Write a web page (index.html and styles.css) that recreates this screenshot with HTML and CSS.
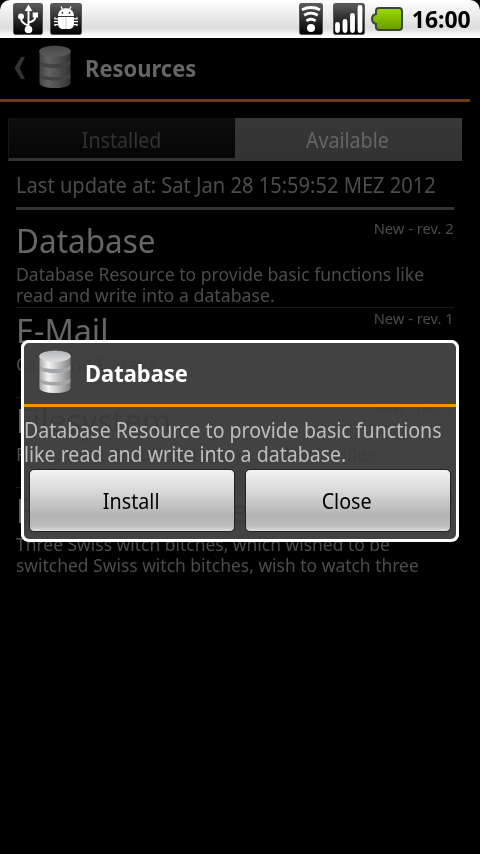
FILE: index.html
```html
<!DOCTYPE html>
<html lang="en">
<head>
<meta charset="utf-8">
<title>Resources</title>
<link rel="stylesheet" href="styles.css">
</head>
<body>
<svg width="0" height="0" class="defs">
  <defs>
    <linearGradient id="metal"><stop offset="0" stop-color="#a8a8a8"/><stop offset=".28" stop-color="#f4f4f4"/><stop offset=".6" stop-color="#c4c4c4"/><stop offset="1" stop-color="#808080"/></linearGradient>
    <linearGradient id="lid" x2="0" y2="1"><stop offset="0" stop-color="#b4b6b9"/><stop offset="1" stop-color="#dcdddf"/></linearGradient>
    <linearGradient id="tile" x2="0" y2="1"><stop offset="0" stop-color="#5c5c5c"/><stop offset=".6" stop-color="#222"/><stop offset="1" stop-color="#000"/></linearGradient>
    <linearGradient id="charge" x2="0" y2="1"><stop offset="0" stop-color="#9bdc00"/><stop offset="1" stop-color="#679800"/></linearGradient>
    <symbol id="db" viewBox="0 0 32 44">
      <path d="M.5 31v7c0 3 7 5 15.500 5s15.500-2 15.500-5v-7z" fill="url(#metal)"/>
      <path d="M.5 28v3c0 6 31 6 31 0v-3z" fill="#a3a6a9"/>
      <path d="M.5 19v8.500c0 3 7 4.500 15.500 4.500s15.500-1.500 15.500-4.500v-8.500z" fill="url(#metal)"/>
      <path d="M.5 15v3.500c0 6 31 6 31 0v-3.500z" fill="#a3a6a9"/>
      <path d="M.5 6v8.500c0 3 7 4.500 15.500 4.500s15.500-1.500 15.500-4.500v-8.500z" fill="url(#metal)"/>
      <ellipse cx="16" cy="6.200" rx="15.500" ry="5.200" fill="url(#lid)" stroke="#d8d8d8" stroke-width=".6"/>
    </symbol>
  </defs>
</svg>

<div class="status">
  <svg class="usb" width="30" height="32" viewBox="0 0 30 32"><rect x=".5" y=".5" width="29" height="31" rx="2" fill="url(#tile)" stroke="#555"/><path d="M15.500 6v21M15.500 22.500q-7.500-2-7.500-8M15.500 19.500q7-1 7-7" fill="none" stroke="#fff" stroke-width="2"/><path d="M15.500 1.500l3.800 6.500h-7.600z" fill="#fff"/><circle cx="8" cy="13.500" r="3" fill="#fff"/><path d="M19.700 9.500h5.300v5h-5.300z" fill="#fff"/><circle cx="15.500" cy="26.500" r="3.800" fill="#fff"/></svg>
  <svg class="bug" width="32" height="32" viewBox="0 0 32 32"><rect x=".5" y=".5" width="31" height="31" rx="2" fill="url(#tile)" stroke="#555"/><path d="M8 13c0-10.500 16-10.500 16 0zM8 14h16v7c0 3-2.500 5-5 5h-6c-2.500 0-5-2-5-5z" fill="#fff"/><path d="M11 3.500l1.500 3M21 3.500l-1.500 3M8 18.700H4M8 15.800H5v-1.500M8 21.600H5v1.500M24 18.700h4M24 15.800h3v-1.500M24 21.600h3v1.500" fill="none" stroke="#fff" stroke-width="1.300"/><path d="M16 14v12" stroke="#ccc"/><circle cx="12.500" cy="9.800" r=".9" fill="#222"/><circle cx="19.500" cy="9.800" r=".9" fill="#222"/></svg>
  <span class="spring"></span>
  <svg class="wifi" width="24" height="32" viewBox="0 0 24 32"><rect x=".5" y=".5" width="23" height="31" rx="2" fill="url(#tile)" stroke="#555"/><g fill="none" stroke="#fff" stroke-width="2.800"><path d="M3 6.800q9-4.600 18 0"/><path d="M5.200 12.300q6.800-4.200 13.600 0"/><path d="M7.400 17.800q4.600-3.200 9.200 0"/></g><circle cx="12" cy="25" r="4" fill="#fff"/></svg>
  <svg class="signal" width="32" height="32" viewBox="0 0 32 32"><rect x=".5" y=".5" width="31" height="31" rx="2" fill="url(#tile)" stroke="#555"/><path d="M4.500 21.500v6M12 18.500v9M19.500 12.500v15M27 4.500v23" stroke="#fff" stroke-width="4.800" stroke-linecap="round"/></svg>
  <svg class="battery" width="32" height="24" viewBox="0 0 32 24"><path d="M8 1h20q3 0 3 3v16q0 3-3 3H8q-3 0-3-3v-3q-4-1-4-5t4-5V4q0-3 3-3z" fill="url(#charge)" stroke="#3c4438" stroke-width="2"/></svg>
  <span class="clock t">16:00</span>
</div>

<div class="screen">
  <header class="bar">
    <svg class="back" width="12" height="22" viewBox="0 0 12 22"><path d="M7 0h4L5.500 11 11 22H7L.5 11z" fill="#333"/></svg>
    <svg class="db dim" width="32" height="44"><use href="#db"/></svg>
    <h1><span class="t">Resources</span></h1>
  </header>
  <nav class="tabs">
    <div class="tab"><span class="t">Installed</span></div>
    <div class="tab active"><span class="t">Available</span></div>
  </nav>
  <p class="updated"><span class="t">Last update at: Sat Jan 28 15:59:52 MEZ 2012</span></p>
  <ul class="list">
    <li><div class="head"><span class="t name">Database</span><span class="t rev">New - rev. 2</span></div>
      <p><span class="t">Database Resource to provide basic functions like</span><br><span class="t wide">read and write into a database.</span></p></li>
    <li><div class="head"><span class="t name wide">E-Mail</span><span class="t rev">New - rev. 1</span></div>
      <p><span class="t">Can send E-Mails</span></p></li>
    <li><div class="head"><span class="t name">Filesystem</span><span class="t rev">New - rev. 2</span></div>
      <p><span class="t full">Filesystem Resource to read and write files.</span></p></li>
    <li><div class="head"><span class="t name wide">Event Resources</span><span class="t rev">New - rev. 4</span></div>
      <p><span class="t snug">Three Swiss witch bitches, which wished to be</span><br><span class="t snug">switched Swiss witch bitches, wish to watch three</span></p></li>
  </ul>
</div>

<div class="dialog">
  <div class="title"><svg class="db" width="32" height="44"><use href="#db"/></svg><h2><span class="t">Database</span></h2></div>
  <p class="message"><span class="t">Database Resource to provide basic functions</span><br><span class="t">like read and write into a database.</span></p>
  <div class="buttons"><button><span class="t">Install</span></button><button><span class="t">Close</span></button></div>
</div>
</body>
</html>
```

FILE: styles.css
```css
* { box-sizing: border-box; margin: 0; padding: 0; }
body { width: 480px; height: 854px; overflow: hidden; background: #000; font-family: "Noto Sans", "Open Sans", sans-serif; position: relative; }
.defs { position: absolute; }
.t { display: inline-block; white-space: nowrap; transform-origin: 0 50%; }
.status { height: 38px; display: flex; align-items: center; padding: 0 9px 0 13px; border-radius: 10px 10px 0 0; background: linear-gradient(#fff, #dedede 72%, #e4e4e4 80%, #f4f4f4 88%, #fff); }
.spring { flex: 1; }
.bug { margin-left: 7px; }
.signal { margin-left: 10px; }
.battery { margin-left: 6px; margin-top: -1px; }
.clock { margin-left: 6px; font-size: 24px; font-weight: 700; line-height: 32px; color: #000; transform: scaleX(.955); transform-origin: 100% 50%; }
.bar { height: 64px; width: 470px; display: flex; align-items: center; padding: 0 0 1px 14px; border-bottom: 3px solid #6e3d00; }
.bar .db { margin-left: 13px; margin-top: -3px; }
.dim { opacity: .4; }
h1, h2 { font-size: 24px; line-height: 32px; margin-left: 14px; }
h1 { color: #666; margin-top: -1px; }
h1 .t, h2 .t { transform: scaleX(.914); }
.tabs { margin: 16px 18px 0 8px; height: 43px; display: flex; }
.tab { flex: 1; display: flex; justify-content: center; align-items: center; padding: 4px 1px 0 0; font-size: 21px; color: #333; background: linear-gradient(#0e0e0e, #050505); border-bottom: 3px solid #333; border-left: 1px solid #171717; }
.tab .t { transform: scaleX(.935); transform-origin: 50% 50%; }
.tab.active { background: linear-gradient(#383838, #323232); color: #666; border-color: #333; padding-right: 2px; }
.updated { margin: 0 26px 0 16px; height: 49px; border-bottom: 3px solid #333; font-size: 21px; line-height: 48px; color: #4c4c4c; }
.updated .t { transform: scaleX(.957); }
.list { list-style: none; margin: 8px 26px 0 16px; }
.list li { height: 90px; border-bottom: 1px solid #171717; }
.list li:last-child { border: 0; }
.head { display: flex; justify-content: space-between; height: 46px; }
.name { font-size: 33px; line-height: 46px; color: #666; transform: scaleX(.954); }
.name.wide { transform: scaleX(.98); }
.rev { font-size: 15px; line-height: 20px; color: #4c4c4c; transform: scaleX(.98); transform-origin: 100% 50%; }
.list p { font-size: 18px; line-height: 21px; color: #4c4c4c; }
.list p .t { transform: scaleX(.977); }
.list p .wide { transform: scaleX(.985); }
.list p .full { transform: none; }
.list p .snug { transform: scaleX(.969); }
.dialog { position: absolute; left: 21px; top: 340px; width: 438px; height: 202px; border: 3px solid #fff; border-radius: 8px; background: rgba(52, 52, 52, .93); backdrop-filter: invert(1); }
.title { height: 64px; display: flex; align-items: center; padding: 0 0 2px 15px; border-bottom: 3px solid #ff9000; }
.title .db { margin-top: -2px; }
h2 { color: #fff; padding-top: 1px; }
.message { padding: 11px 0 0 0; font-size: 21px; line-height: 24px; color: #bebebe; height: 61px; }
.message .t { transform: scaleX(.932); }
.buttons { display: flex; gap: 10px; padding: 1px 5px 0; }
button { flex: 1; height: 63px; padding-right: 2px; border: 1px solid #222; border-radius: 5px; background: linear-gradient(#f4f4f4, #d4d4d4 40%, #b4b4b4 75%, #bcbcbc 92%, #dedede); font: 21px "Noto Sans", sans-serif; color: #000; }
button .t { transform: scaleX(.938); transform-origin: 50% 50%; }
```
